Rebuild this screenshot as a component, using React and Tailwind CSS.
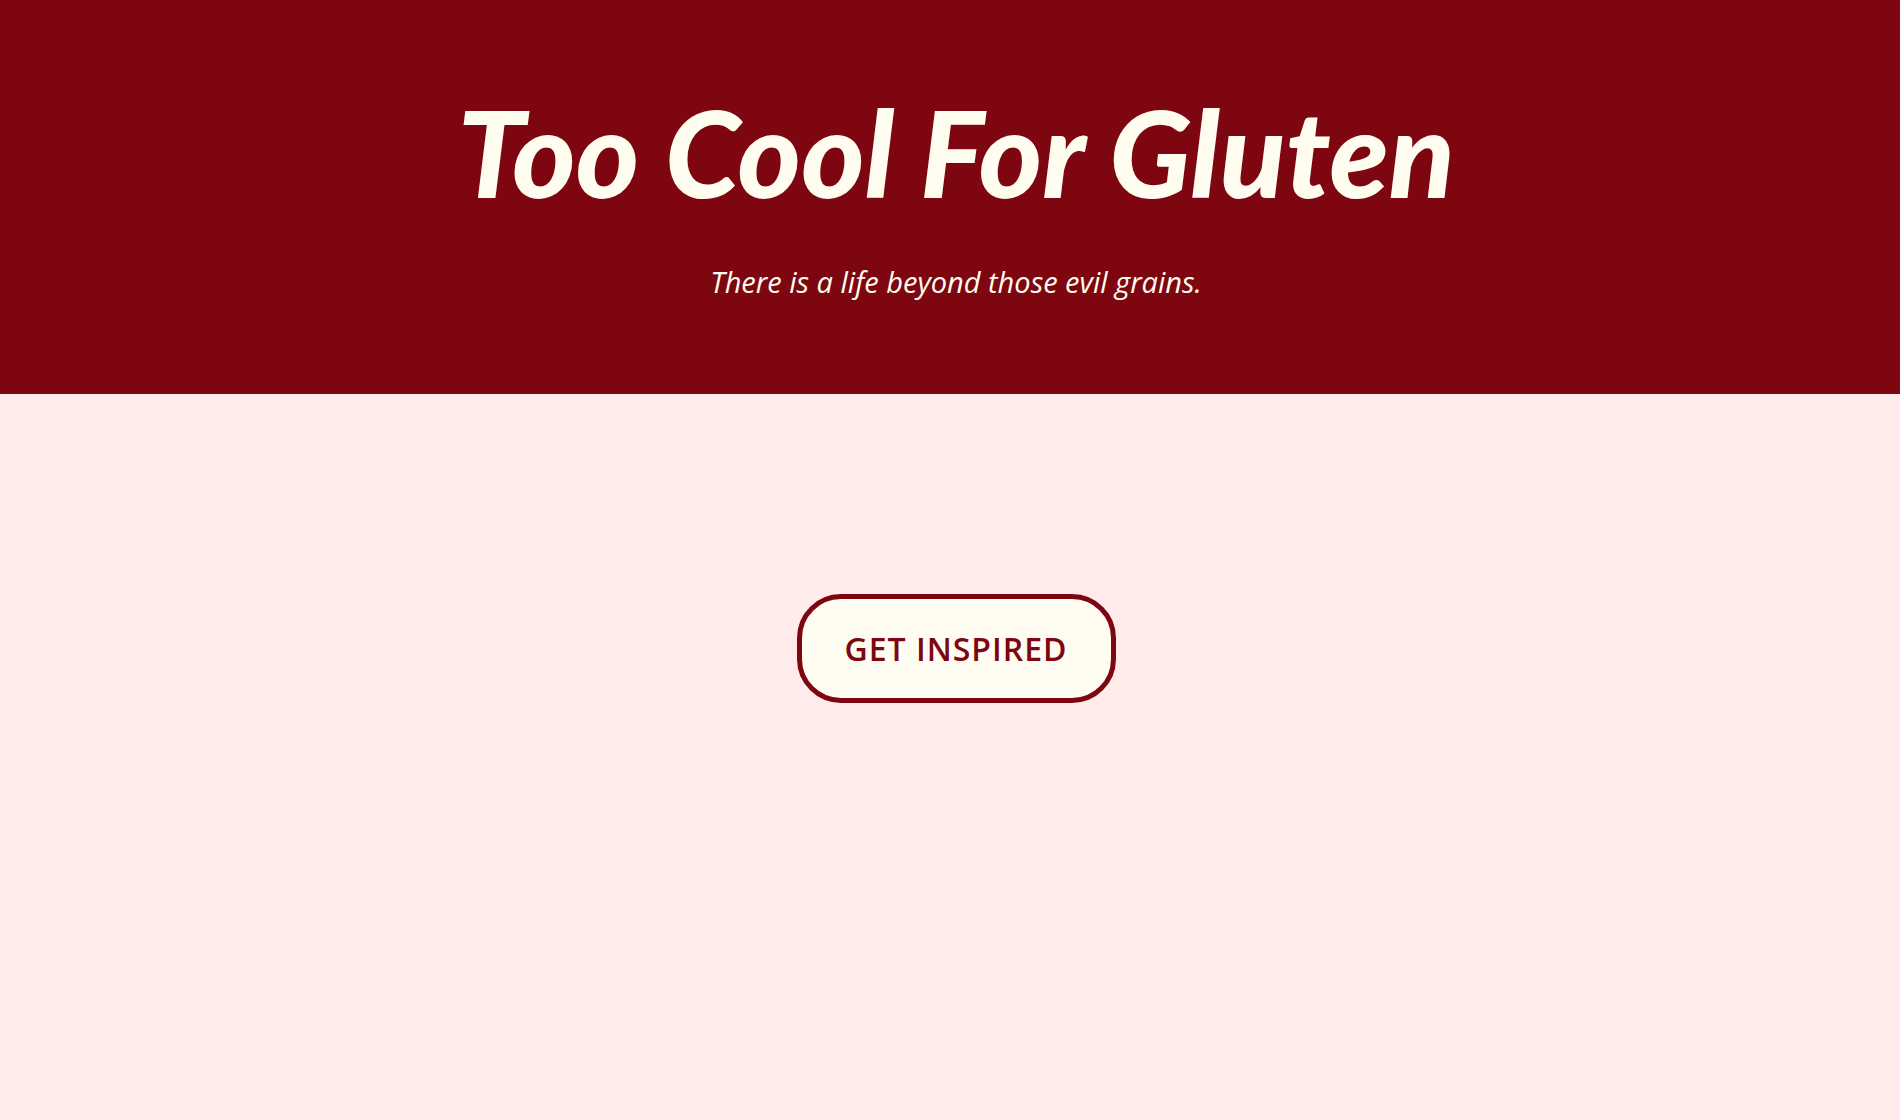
export default function App() {
  return (
    <div className="min-h-[1120px] bg-[#ffebea] pl-[12px]">
      <header className="-ml-[12px] h-[394px] bg-[#7d0610] pl-[12px] pt-[91px] text-center">
        <h1 className="font-['Lato',sans-serif] text-[121px] font-black italic leading-none text-[#fffdf0]">
          Too Cool For Gluten
        </h1>
        <p className="mt-[55px] font-['Open_Sans',sans-serif] text-[29px] italic leading-none text-[#fffdf0]">
          There is a life beyond those evil grains.
        </p>
      </header>

      <main className="flex justify-center pt-[200px]">
        <button className="flex h-[109px] w-[319px] items-center justify-center rounded-[44px] border-[5px] border-[#7d0610] bg-[#fffdf2] font-['Open_Sans',sans-serif] text-[32px] font-semibold uppercase tracking-[1px] text-[#7d0610]">
          Get Inspired
        </button>
      </main>
    </div>
  )
}
